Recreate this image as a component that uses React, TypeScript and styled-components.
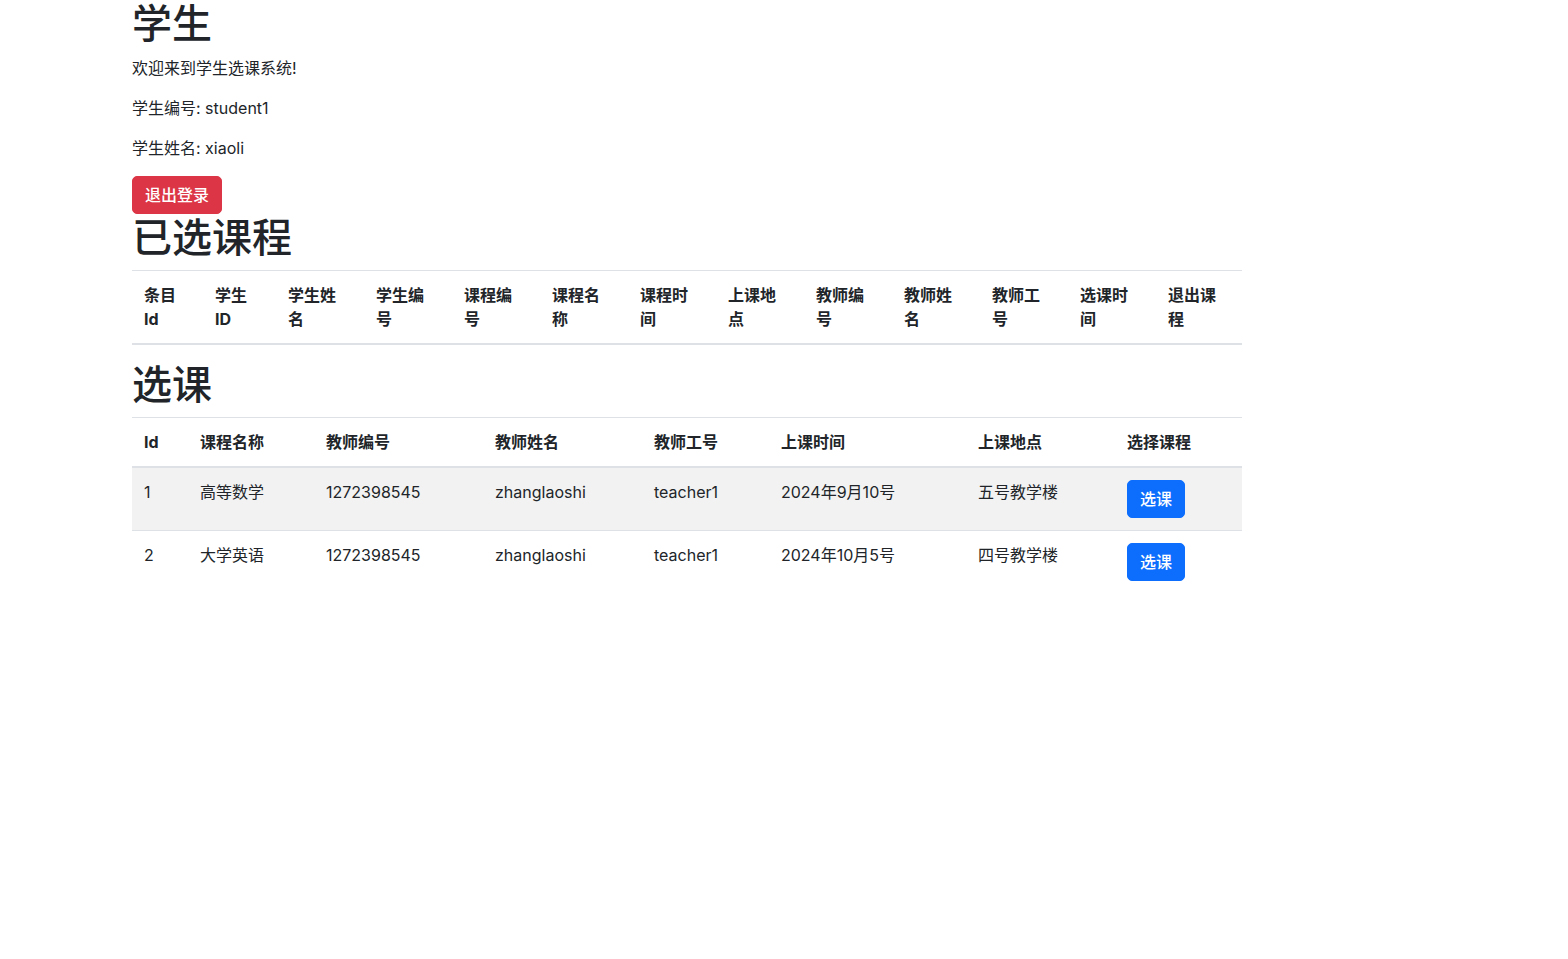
import React from "react";
import styled, { createGlobalStyle } from "styled-components";

const GlobalStyle = createGlobalStyle`
  html, body {
    margin: 0;
    padding: 0;
    background: #fff;
  }
  body {
    font-family: Inter, "Noto Sans CJK SC", sans-serif;
    font-size: 16px;
    line-height: 1.5;
    color: #212529;
  }
  * { box-sizing: border-box; }
`;

const Container = styled.div`
  width: 1110px;
  margin-left: 132px;
  display: flex;
  flex-direction: column;
  align-items: flex-start;
`;

const Heading = styled.h1`
  margin: 0 0 8px;
  font-size: 40px;
  line-height: 1.2;
  font-weight: 500;
`;

const Para = styled.p`
  margin: 0 0 16px;
`;

const Button = styled.button<{ $variant: "danger" | "primary" }>`
  display: inline-block;
  font-family: inherit;
  font-size: 16px;
  font-weight: 500;
  line-height: 24px;
  padding: 6px 12px;
  border-radius: 5px;
  border: 1px solid ${(p) => (p.$variant === "danger" ? "#dc3545" : "#0d6efd")};
  background: ${(p) => (p.$variant === "danger" ? "#dc3545" : "#0d6efd")};
  color: #fff;
  cursor: pointer;
`;

const Table = styled.table`
  width: 1110px;
  border-collapse: collapse;
  table-layout: fixed;
  margin-bottom: 16px;
  color: #212529;
`;

const Th = styled.th`
  padding: 12px 12.3px 12px 12px;
  text-align: left;
  vertical-align: bottom;
  font-weight: 700;
  border-top: 1px solid #dee2e6;
  border-bottom: 2px solid #dee2e6;
  line-height: 24px;
`;

const Tr = styled.tr<{ $striped?: boolean }>`
  background: ${(p) => (p.$striped ? "#f2f2f2" : "transparent")};
`;

const Td = styled.td`
  padding: 12px;
  vertical-align: top;
  border-top: 1px solid #dee2e6;
  line-height: 24px;
`;

const selectedCols = [
  "条目 Id",
  "学生 ID",
  "学生姓名",
  "学生编号",
  "课程编号",
  "课程名称",
  "课程时间",
  "上课地点",
  "教师编号",
  "教师姓名",
  "教师工号",
  "选课时间",
  "退出课程",
];
const selectedWidths = [71, 73, 88, 88, 88, 88, 88, 88, 88, 88, 88, 88, 86];

const courseCols = ["Id", "课程名称", "教师编号", "教师姓名", "教师工号", "上课时间", "上课地点", "选择课程"];
const courseWidths = [56, 126, 169, 159, 127, 197, 149, 127];

const courses = [
  { id: 1, name: "高等数学", tno: "1272398545", tname: "zhanglaoshi", tid: "teacher1", time: "2024年9月10号", place: "五号教学楼" },
  { id: 2, name: "大学英语", tno: "1272398545", tname: "zhanglaoshi", tid: "teacher1", time: "2024年10月5号", place: "四号教学楼" },
];

export default function App() {
  return (
    <>
      <GlobalStyle />
      <Container>
        <Heading>学生</Heading>
        <Para>欢迎来到学生选课系统!</Para>
        <Para>学生编号: student1</Para>
        <Para>学生姓名: xiaoli</Para>
        <Button $variant="danger">退出登录</Button>
        <Heading>已选课程</Heading>
        <Table>
          <colgroup>
            {selectedWidths.map((w, i) => (
              <col key={i} style={{ width: w }} />
            ))}
          </colgroup>
          <thead>
            <tr>
              {selectedCols.map((c) => (
                <Th key={c}>{c}</Th>
              ))}
            </tr>
          </thead>
          <tbody></tbody>
        </Table>
        <Heading>选课</Heading>
        <Table>
          <colgroup>
            {courseWidths.map((w, i) => (
              <col key={i} style={{ width: w }} />
            ))}
          </colgroup>
          <thead>
            <tr>
              {courseCols.map((c) => (
                <Th key={c}>{c}</Th>
              ))}
            </tr>
          </thead>
          <tbody>
            {courses.map((c, i) => (
              <Tr key={c.id} $striped={i % 2 === 0}>
                <Td>{c.id}</Td>
                <Td>{c.name}</Td>
                <Td>{c.tno}</Td>
                <Td>{c.tname}</Td>
                <Td>{c.tid}</Td>
                <Td>{c.time}</Td>
                <Td>{c.place}</Td>
                <Td>
                  <Button $variant="primary">选课</Button>
                </Td>
              </Tr>
            ))}
          </tbody>
        </Table>
      </Container>
    </>
  );
}
